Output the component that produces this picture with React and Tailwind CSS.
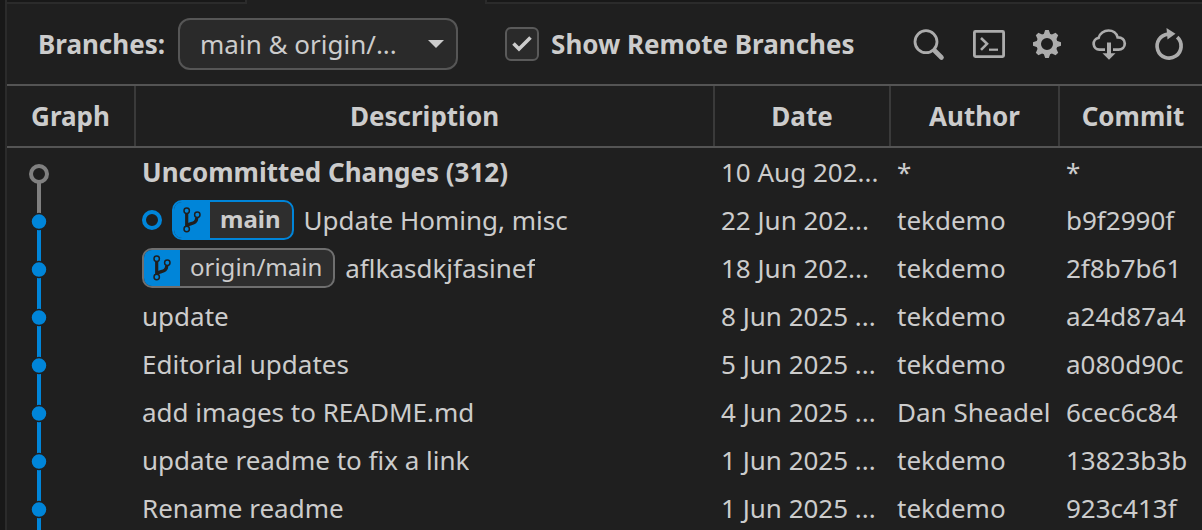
import React from "react";

const commits = [
  { kind: "uncommitted", text: "Uncommitted Changes (312)", date: "10 Aug 202...", author: "*", hash: "*" },
  { kind: "head", tag: "main", text: "Update Homing, misc", date: "22 Jun 202...", author: "tekdemo", hash: "b9f2990f" },
  { tag: "origin/main", text: "aflkasdkjfasinef", date: "18 Jun 202...", author: "tekdemo", hash: "2f8b7b61" },
  { text: "update", date: "8 Jun 2025 ...", author: "tekdemo", hash: "a24d87a4" },
  { text: "Editorial updates", date: "5 Jun 2025 ...", author: "tekdemo", hash: "a080d90c" },
  { text: "add images to README.md", date: "4 Jun 2025 ...", author: "Dan Sheadel", hash: "6cec6c84" },
  { text: "update readme to fix a link", date: "1 Jun 2025 ...", author: "tekdemo", hash: "13823b3b" },
  { text: "Rename readme", date: "1 Jun 2025 ...", author: "tekdemo", hash: "923c413f" },
];

function IconButton({ label, children }) {
  return (
    <button type="button" aria-label={label} className="size-9 shrink-0 text-[#acacac]">
      <svg viewBox="0 0 36 36" className="block size-9" fill="none" stroke="currentColor">
        {children}
      </svg>
    </button>
  );
}

function GearShape() {
  return (
    <g transform="translate(16 18)" stroke="none" fill="currentColor">
      {[0, 45, 90, 135, 180, 225, 270, 315].map((a) => (
        <path key={a} d="M-3.6 -9L-1.8 -14H1.8L3.6 -9Z" transform={`rotate(${a})`} />
      ))}
      <path fillRule="evenodd" d="M0 -10.6A10.6 10.6 0 1 1 0 10.6A10.6 10.6 0 1 1 0 -10.6ZM0 -6A6 6 0 1 0 0 6A6 6 0 1 0 0 -6Z" />
    </g>
  );
}

function BranchIcon() {
  return (
    <svg viewBox="0 0 36 36" className="block size-9 bg-[#0085d9]" fill="none" stroke="#1f1f1f" aria-hidden="true">
      <path d="M12.7 11V25" strokeWidth="3.2" />
      <path d="M22.8 15.5C22.6 22.5 16.5 20.5 12.9 23.6" strokeWidth="3.4" />
      <g fill="#0085d9" strokeWidth="1.5">
        <circle cx="12.7" cy="8.8" r="2.7" />
        <circle cx="23.3" cy="12.8" r="2.7" />
        <circle cx="12.7" cy="27" r="2.7" />
      </g>
    </svg>
  );
}

function GraphCell({ kind }) {
  const top = kind === "head" ? "#808080" : "#0085d9";
  return (
    <svg className="block h-12 w-16" viewBox="0 0 64 48" fill="none" aria-hidden="true">
      {kind === "uncommitted" ? (
        <>
          <path d="M32 26V48" stroke="#808080" strokeWidth="4" />
          <circle cx="32" cy="26" r="8" fill="#1f1f1f" stroke="#808080" strokeWidth="4" />
        </>
      ) : (
        <>
          <path d="M32 0V26" stroke={top} strokeWidth="4" />
          <path d="M32 26V48" stroke="#0085d9" strokeWidth="4" />
          <circle cx="32" cy="25.6" r="8" fill="#0085d9" stroke="#1f1f1f" strokeWidth="1.5" />
        </>
      )}
    </svg>
  );
}

function RefTag({ name, current }) {
  return (
    <span
      className={
        current
          ? "flex h-10 shrink-0 overflow-hidden rounded-[10px] border-2 border-[#0085d9] bg-[#2e2e2e] font-bold"
          : "flex h-10 shrink-0 overflow-hidden rounded-[10px] border-2 border-[#6f6f6f] bg-[#2e2e2e]"
      }
    >
      <BranchIcon />
      <span className="pr-[11px] pl-[10px] text-[24px] leading-[34px]">{name}</span>
    </span>
  );
}

function Header({ children, last }) {
  return (
    <th
      scope="col"
      className={
        last
          ? "h-[62px] border-b-2 border-[#545454] pl-1 font-bold"
          : "h-[62px] border-b-2 border-[#545454] p-0 font-bold"
      }
    >
      <div
        className={
          last
            ? "flex h-[60px] items-center justify-center"
            : "flex h-[60px] items-center justify-center border-r-2 border-[#3a3a3a]"
        }
      >
        {children}
      </div>
    </th>
  );
}

export default function App() {
  return (
    <div className="flex h-screen overflow-hidden bg-[#1f1f1f] font-['Noto_Sans',sans-serif] text-[26px] leading-[36px] text-[#cccccc]">
      <div className="w-[7px] shrink-0 border-r-2 border-[#2b2b2b] bg-[#181818]" />
      <div className="min-w-0 flex-1">
        <div className="flex h-1">
          <div className="w-60 border-r-2 border-b-2 border-[#2b2b2b] bg-[#181818]" />
          <div className="w-[238px]" />
          <div className="flex-1 border-b-2 border-l-2 border-[#2b2b2b] bg-[#181818]" />
        </div>

        <header className="flex h-20 items-center pr-[15px] pl-[31px]">
          <label htmlFor="branches" className="font-bold whitespace-nowrap">Branches:</label>
          <div className="relative ml-[13px] w-[280px] shrink-0">
            <select
              id="branches"
              className="block h-[52px] w-full appearance-none rounded-xl border-2 border-[#565656] bg-[#2a2a2a] pr-12 pl-5"
            >
              <option>main &amp; origin/...</option>
            </select>
            <svg viewBox="0 0 16 8" className="pointer-events-none absolute top-[22px] right-[14px] h-2 w-4" fill="#cccccc" aria-hidden="true">
              <path d="M0 0H16L8 8Z" />
            </svg>
          </div>
          <div className="relative ml-[47px] size-[34px] shrink-0">
            <input
              id="remote"
              type="checkbox"
              defaultChecked
              className="block size-[34px] appearance-none rounded-md border-2 border-[#5a5a5a] bg-[#2a2a2a]"
            />
            <svg viewBox="0 0 34 34" className="pointer-events-none absolute inset-0" fill="none" stroke="#cccccc" strokeWidth="3.6" aria-hidden="true">
              <path d="M8.5 16.5L14 22L25.5 10.5" />
            </svg>
          </div>
          <label htmlFor="remote" className="ml-3 font-bold whitespace-nowrap">Show Remote Branches</label>
          <div className="ml-auto flex gap-6">
            <IconButton label="Search">
              <circle cx="15" cy="15.7" r="11" strokeWidth="2.8" />
              <path d="M23.5 24.5L30.5 31.5" strokeWidth="4.6" strokeLinecap="round" />
            </IconButton>
            <IconButton label="Open terminal">
              <rect x="3.4" y="5.4" width="29.2" height="25.2" rx="1" strokeWidth="2.8" />
              <path d="M10 12L16 17.8L10 23.8" strokeWidth="2.6" />
              <path d="M18 23.7H27" strokeWidth="2.2" />
            </IconButton>
            <IconButton label="Settings">
              <GearShape />
            </IconButton>
            <IconButton label="Fetch from remote">
              <path
                d="M14 23.7H8.4A6 6 0 0 1 7.6 11.8C8.8 7.4 13 4.5 17.5 4.5C22 4.5 25.6 7.2 26.6 11.3C31 11.2 33.8 14 33.8 17.6C33.8 21.2 31 23.7 27.5 23.7H22"
                strokeWidth="2.7"
              />
              <path d="M16 16.5H20V27.3H24.5L18 33.7L11.5 27.3H16Z" fill="currentColor" stroke="none" />
            </IconButton>
            <IconButton label="Refresh">
              <path d="M26.2 11.2A12 12 0 1 1 17 8.1" strokeWidth="3.7" />
              <path d="M15.5 2L24.5 7.8L16.5 13.5Z" fill="currentColor" stroke="none" />
            </IconButton>
          </div>
        </header>

        <table className="w-full table-fixed border-separate border-spacing-0 border-t-2 border-[#545454]">
          <colgroup>
            <col className="w-[129px]" />
            <col />
            <col className="w-[176px]" />
            <col className="w-[169px]" />
            <col className="w-[142px]" />
          </colgroup>
          <thead>
            <tr>
              <Header>Graph</Header>
              <Header>Description</Header>
              <Header>Date</Header>
              <Header>Author</Header>
              <Header last>Commit</Header>
            </tr>
          </thead>
          <tbody>
            {commits.map((c) => (
              <tr key={c.hash} className="h-12 whitespace-nowrap">
                <td className="p-0">
                  <GraphCell kind={c.kind} />
                </td>
                <td className="px-[6px] py-0">
                  <div className="flex items-center gap-[10px]">
                    {c.kind === "head" && (
                      <span className="size-5 shrink-0 rounded-full border-4 border-[#0085d9]" />
                    )}
                    {c.tag && <RefTag name={c.tag} current={c.kind === "head"} />}
                    <span className={c.kind === "uncommitted" ? "truncate font-bold" : "truncate"}>{c.text}</span>
                  </div>
                </td>
                <td className="px-[6px] py-0">{c.date}</td>
                <td className="px-[6px] py-0">{c.author}</td>
                <td className="px-[6px] py-0">{c.hash}</td>
              </tr>
            ))}
          </tbody>
        </table>
      </div>
    </div>
  );
}
